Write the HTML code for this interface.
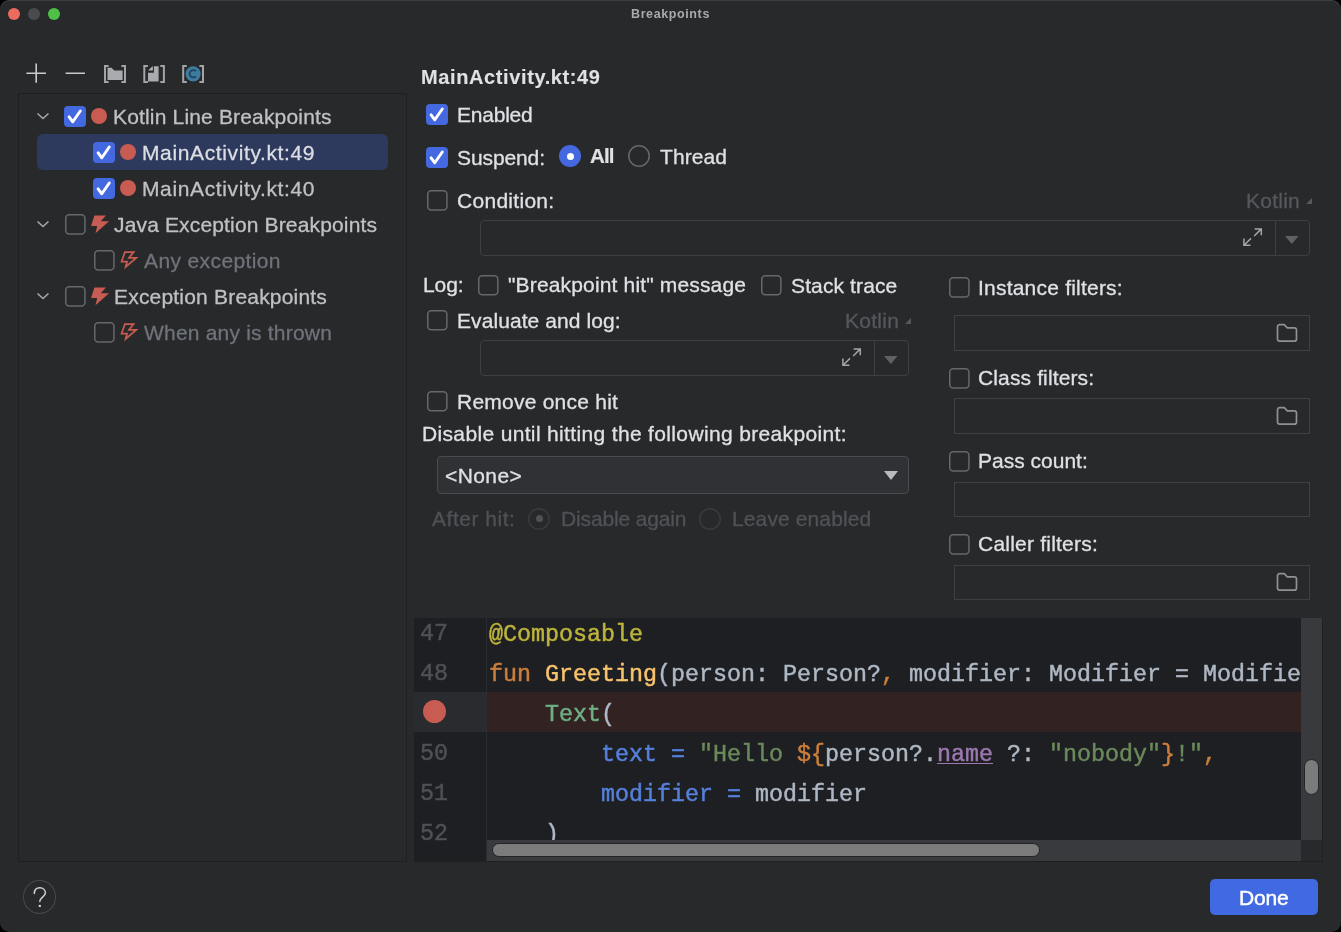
<!DOCTYPE html>
<html><head><meta charset="utf-8"><style>
html,body{margin:0;padding:0;background:#000;}
body{width:1341px;height:932px;overflow:hidden;position:relative;}
.win{position:absolute;left:0;top:0;width:1341px;height:932px;background:#28292B;border-radius:9.5px;box-shadow:inset 0 1px 0 #3C3D40;}
.r{position:absolute;}
.t{position:absolute;white-space:pre;-webkit-font-smoothing:antialiased;will-change:transform;-webkit-text-stroke:0.3px currentColor;font-family:"Liberation Sans",sans-serif;}
.code{font-family:"Liberation Mono",monospace;font-size:23.33px;line-height:23.33px;white-space:pre;-webkit-text-stroke:0.45px currentColor;}
.clip{position:absolute;overflow:hidden;}
</style></head><body>
<div class="win"></div>
<div class="r" style="left:8px;top:8px;width:12px;height:12px;background:#EC6A5E;border-radius:50%;"></div>
<div class="r" style="left:28px;top:8px;width:12px;height:12px;background:#4A4B4E;border-radius:50%;"></div>
<div class="r" style="left:48px;top:8px;width:12px;height:12px;background:#4EC048;border-radius:50%;"></div>
<div class="t" style="left:631.20px;top:7.71px;font-size:12.5px;line-height:12.5px;font-weight:700;color:#A9AAAD;letter-spacing:0.610px;font-family:'Liberation Sans', sans-serif;-webkit-text-stroke:0;">Breakpoints</div>
<svg class="r" style="left:0;top:0" width="100" height="95"><path d="M36.2 63.4V82.8M26.4 73.2H46M65.6 73.2H85" stroke="#C9CACD" stroke-width="1.6"/></svg>
<svg class="r" style="left:0;top:0" width="220" height="95" viewBox="0 0 220 95"><path d="M108.6 66H105V82H108.6" fill="none" stroke="#A3A4A7" stroke-width="2"/><path d="M121.4 66H125V82H121.4" fill="none" stroke="#A3A4A7" stroke-width="2"/><path d="M107.5 67.8H111.6L114.2 70.5H122.6V80H107.5Z" fill="#AAABAE"/><path d="M147.9 66H144.3V82H147.9" fill="none" stroke="#A3A4A7" stroke-width="2"/><path d="M160.3 66H163.9V82H160.3" fill="none" stroke="#A3A4A7" stroke-width="2"/><path d="M153.9 66.3H158.6V81.6H148V72.8H153.9Z" fill="#AAABAE"/><path d="M148.2 70.6L152.8 66.0V70.6Z" fill="#B4B5B8"/><path d="M186.79999999999998 66H183.2V82H186.79999999999998" fill="none" stroke="#A3A4A7" stroke-width="2"/><path d="M199.4 66H203V82H199.4" fill="none" stroke="#A3A4A7" stroke-width="2"/><circle cx="193.1" cy="73.8" r="7.6" fill="#3E7BA0"/><path d="M196.0 71.2A3.7 3.7 0 1 0 196.0 76.4" fill="none" stroke="#24465C" stroke-width="1.9"/></svg>
<div class="r" style="left:18px;top:93px;width:389px;height:769px;border:1px solid #1E1F22;box-sizing:border-box;"></div>
<div class="r" style="left:37px;top:134px;width:351px;height:36px;background:#2D3A5E;border-radius:6px;"></div>
<svg class="r" style="left:36px;top:111px" width="14" height="10" viewBox="0 0 14 10"><path d="M1.5 2.5L7 7.5L12.5 2.5" fill="none" stroke="#A8AAAE" stroke-width="1.5"/></svg>
<div class="r" style="left:64.2px;top:105.8px;width:21.60000000000001px;height:21.60000000000001px;background:#4468E0;border-radius:4px;"></div>
<svg class="r" style="left:64.2px;top:105.8px" width="21.6" height="21.6" viewBox="0 0 21.6 21.6"><path d="M5.10 10.80 L8.79 15.79 L16.31 4.99" fill="none" stroke="#fff" stroke-width="2.9" stroke-linecap="round" stroke-linejoin="round"/></svg>
<div class="r" style="left:91.0px;top:108.0px;width:16.0px;height:16.0px;background:#C85B52;border-radius:50%;"></div>
<div class="t" style="left:112.50px;top:105.72px;font-size:21px;line-height:21px;font-weight:400;color:#C0C1C4;letter-spacing:0.168px;font-family:'Liberation Sans', sans-serif;">Kotlin Line Breakpoints</div>
<div class="r" style="left:93.2px;top:141.9px;width:21.60000000000001px;height:21.599999999999994px;background:#4468E0;border-radius:4px;"></div>
<svg class="r" style="left:93.2px;top:141.9px" width="21.6" height="21.6" viewBox="0 0 21.6 21.6"><path d="M5.10 10.80 L8.79 15.79 L16.31 4.99" fill="none" stroke="#fff" stroke-width="2.9" stroke-linecap="round" stroke-linejoin="round"/></svg>
<div class="r" style="left:120.0px;top:144.0px;width:16.0px;height:16.0px;background:#C85B52;border-radius:50%;"></div>
<div class="t" style="left:141.60px;top:141.72px;font-size:21px;line-height:21px;font-weight:400;color:#DCDEE2;letter-spacing:0.629px;font-family:'Liberation Sans', sans-serif;">MainActivity.kt:49</div>
<div class="r" style="left:93.2px;top:177.9px;width:21.60000000000001px;height:21.599999999999994px;background:#4468E0;border-radius:4px;"></div>
<svg class="r" style="left:93.2px;top:177.9px" width="21.6" height="21.6" viewBox="0 0 21.6 21.6"><path d="M5.10 10.80 L8.79 15.79 L16.31 4.99" fill="none" stroke="#fff" stroke-width="2.9" stroke-linecap="round" stroke-linejoin="round"/></svg>
<div class="r" style="left:120.0px;top:180.0px;width:16.0px;height:16.0px;background:#C85B52;border-radius:50%;"></div>
<div class="t" style="left:141.60px;top:177.72px;font-size:21px;line-height:21px;font-weight:400;color:#C0C1C4;letter-spacing:0.629px;font-family:'Liberation Sans', sans-serif;">MainActivity.kt:40</div>
<svg class="r" style="left:36px;top:219px" width="14" height="10" viewBox="0 0 14 10"><path d="M1.5 2.5L7 7.5L12.5 2.5" fill="none" stroke="#A8AAAE" stroke-width="1.5"/></svg>
<svg class="r" style="left:63.5px;top:213.1px" width="22.7" height="22.7" viewBox="0 0 22.7 22.7"><rect x="1.75" y="1.75" width="19.2" height="19.2" rx="3.5" fill="none" stroke="#65686D" stroke-width="1.5"/></svg>
<svg class="r" style="left:90.5px;top:215px" width="19" height="19" viewBox="0 0 19 19"><path d="M3.4 0.4H15L9.8 6.3H18.1L4.5 18.3L6.2 11H0.1Z" fill="#C85B52"/></svg>
<div class="t" style="left:114.30px;top:213.72px;font-size:21px;line-height:21px;font-weight:400;color:#C0C1C4;letter-spacing:0.152px;font-family:'Liberation Sans', sans-serif;">Java Exception Breakpoints</div>
<svg class="r" style="left:92.6px;top:249.0px" width="22.7" height="22.7" viewBox="0 0 22.7 22.7"><rect x="1.75" y="1.75" width="19.2" height="19.2" rx="3.5" fill="none" stroke="#65686D" stroke-width="1.5"/></svg>
<svg class="r" style="left:119.5px;top:251px" width="19" height="19" viewBox="0 0 19 19"><path d="M4.9 1.1H13.6L9.0 6.8H16.3L5.6 16.0L7.1 10.5H1.6Z" fill="none" stroke="#C85B52" stroke-width="1.75" stroke-linejoin="miter"/></svg>
<div class="t" style="left:143.70px;top:249.72px;font-size:21px;line-height:21px;font-weight:400;color:#6F737A;letter-spacing:0.383px;font-family:'Liberation Sans', sans-serif;">Any exception</div>
<svg class="r" style="left:36px;top:291px" width="14" height="10" viewBox="0 0 14 10"><path d="M1.5 2.5L7 7.5L12.5 2.5" fill="none" stroke="#A8AAAE" stroke-width="1.5"/></svg>
<svg class="r" style="left:63.5px;top:285.1px" width="22.7" height="22.7" viewBox="0 0 22.7 22.7"><rect x="1.75" y="1.75" width="19.2" height="19.2" rx="3.5" fill="none" stroke="#65686D" stroke-width="1.5"/></svg>
<svg class="r" style="left:90.5px;top:287px" width="19" height="19" viewBox="0 0 19 19"><path d="M3.4 0.4H15L9.8 6.3H18.1L4.5 18.3L6.2 11H0.1Z" fill="#C85B52"/></svg>
<div class="t" style="left:114.30px;top:285.72px;font-size:21px;line-height:21px;font-weight:400;color:#C0C1C4;letter-spacing:0.195px;font-family:'Liberation Sans', sans-serif;">Exception Breakpoints</div>
<svg class="r" style="left:92.6px;top:321.0px" width="22.7" height="22.7" viewBox="0 0 22.7 22.7"><rect x="1.75" y="1.75" width="19.2" height="19.2" rx="3.5" fill="none" stroke="#65686D" stroke-width="1.5"/></svg>
<svg class="r" style="left:119.5px;top:323px" width="19" height="19" viewBox="0 0 19 19"><path d="M4.9 1.1H13.6L9.0 6.8H16.3L5.6 16.0L7.1 10.5H1.6Z" fill="none" stroke="#C85B52" stroke-width="1.75" stroke-linejoin="miter"/></svg>
<div class="t" style="left:143.70px;top:321.72px;font-size:21px;line-height:21px;font-weight:400;color:#6F737A;letter-spacing:0.200px;font-family:'Liberation Sans', sans-serif;">When any is thrown</div>
<div class="t" style="left:420.90px;top:66.56px;font-size:20px;line-height:20px;font-weight:700;color:#DFE1E5;letter-spacing:0.612px;font-family:'Liberation Sans', sans-serif;-webkit-text-stroke:0.1px currentColor;">MainActivity.kt:49</div>
<div class="r" style="left:426.2px;top:103.9px;width:21.600000000000023px;height:21.599999999999994px;background:#4468E0;border-radius:4px;"></div>
<svg class="r" style="left:426.2px;top:103.9px" width="21.6" height="21.6" viewBox="0 0 21.6 21.6"><path d="M5.10 10.80 L8.79 15.79 L16.31 4.99" fill="none" stroke="#fff" stroke-width="2.9" stroke-linecap="round" stroke-linejoin="round"/></svg>
<div class="t" style="left:456.90px;top:103.72px;font-size:21px;line-height:21px;font-weight:400;color:#DFE1E5;letter-spacing:-0.217px;font-family:'Liberation Sans', sans-serif;">Enabled</div>
<div class="r" style="left:426.2px;top:146.9px;width:21.600000000000023px;height:21.599999999999994px;background:#4468E0;border-radius:4px;"></div>
<svg class="r" style="left:426.2px;top:146.9px" width="21.6" height="21.6" viewBox="0 0 21.6 21.6"><path d="M5.10 10.80 L8.79 15.79 L16.31 4.99" fill="none" stroke="#fff" stroke-width="2.9" stroke-linecap="round" stroke-linejoin="round"/></svg>
<div class="t" style="left:456.90px;top:146.52px;font-size:21px;line-height:21px;font-weight:400;color:#DFE1E5;letter-spacing:-0.100px;font-family:'Liberation Sans', sans-serif;">Suspend:</div>
<div class="r" style="left:559.2px;top:145.3px;width:22.0px;height:22.0px;background:#4468E0;border-radius:50%;"></div>
<div class="r" style="left:566.7px;top:152.8px;width:7.0px;height:7.0px;background:#fff;border-radius:50%;"></div>
<div class="t" style="left:590.00px;top:146.44px;font-size:20.5px;line-height:20.5px;font-weight:700;color:#DFE1E5;letter-spacing:-0.850px;font-family:'Liberation Sans', sans-serif;-webkit-text-stroke:0.2px currentColor;">All</div>
<svg class="r" style="left:627.2px;top:144.3px" width="24" height="24" viewBox="0 0 24 24"><circle cx="12.0" cy="12.0" r="10.25" fill="none" stroke="#65686D" stroke-width="1.5"/></svg>
<div class="t" style="left:660.20px;top:146.02px;font-size:21px;line-height:21px;font-weight:400;color:#DFE1E5;letter-spacing:0.100px;font-family:'Liberation Sans', sans-serif;">Thread</div>
<svg class="r" style="left:425.6px;top:189.1px" width="22.7" height="22.7" viewBox="0 0 22.7 22.7"><rect x="1.75" y="1.75" width="19.2" height="19.2" rx="3.5" fill="none" stroke="#65686D" stroke-width="1.5"/></svg>
<div class="t" style="left:456.90px;top:189.62px;font-size:21px;line-height:21px;font-weight:400;color:#DFE1E5;letter-spacing:0.289px;font-family:'Liberation Sans', sans-serif;">Condition:</div>
<div class="t" style="left:1245.60px;top:189.82px;font-size:21px;line-height:21px;font-weight:400;color:#55585D;letter-spacing:0.240px;font-family:'Liberation Sans', sans-serif;">Kotlin</div>
<svg class="r" style="left:1305px;top:197px" width="8" height="8" viewBox="0 0 8 8"><path d="M7 1V7H1Z" fill="#55585D"/></svg>
<div class="r" style="left:480px;top:220px;width:830px;height:36px;border:1px solid #3E4043;border-radius:4px;box-sizing:border-box;"></div>
<div class="r" style="left:1275.4px;top:221px;width:1.0px;height:34px;background:#3E4043;"></div>
<svg class="r" style="left:1241.6px;top:226.6px" width="23" height="21" viewBox="0 0 23 21"><g transform="translate(1 1)" fill="none" stroke="#A3A5A9" stroke-width="1.5"><path d="M11.6 0.9H18.3V7.3M18.3 0.9L11.2 8.0"/><path d="M0.9 10.5V17.2H7.5M0.9 17.2L8.0 10.4"/></g></svg>
<svg class="r" style="left:1285.2px;top:235.7px" width="13.6" height="8" viewBox="0 0 13.6 8"><path d="M0 0H13.6L6.8 8Z" fill="#5F6165"/></svg>
<div class="t" style="left:422.60px;top:273.72px;font-size:21px;line-height:21px;font-weight:400;color:#DFE1E5;letter-spacing:-0.067px;font-family:'Liberation Sans', sans-serif;">Log:</div>
<svg class="r" style="left:476.6px;top:274.2px" width="22.6" height="22.6" viewBox="0 0 22.6 22.6"><rect x="1.75" y="1.75" width="19.1" height="19.1" rx="3.5" fill="none" stroke="#65686D" stroke-width="1.5"/></svg>
<div class="t" style="left:508.40px;top:274.32px;font-size:21px;line-height:21px;font-weight:400;color:#DFE1E5;letter-spacing:0.157px;font-family:'Liberation Sans', sans-serif;">"Breakpoint hit" message</div>
<svg class="r" style="left:759.7px;top:274.1px" width="22.6" height="22.6" viewBox="0 0 22.6 22.6"><rect x="1.75" y="1.75" width="19.1" height="19.1" rx="3.5" fill="none" stroke="#65686D" stroke-width="1.5"/></svg>
<div class="t" style="left:790.90px;top:274.72px;font-size:21px;line-height:21px;font-weight:400;color:#DFE1E5;letter-spacing:0.120px;font-family:'Liberation Sans', sans-serif;">Stack trace</div>
<svg class="r" style="left:425.6px;top:309.0px" width="22.6" height="22.6" viewBox="0 0 22.6 22.6"><rect x="1.75" y="1.75" width="19.1" height="19.1" rx="3.5" fill="none" stroke="#65686D" stroke-width="1.5"/></svg>
<div class="t" style="left:457.20px;top:309.62px;font-size:21px;line-height:21px;font-weight:400;color:#DFE1E5;letter-spacing:0.081px;font-family:'Liberation Sans', sans-serif;">Evaluate and log:</div>
<div class="t" style="left:845.40px;top:309.72px;font-size:21px;line-height:21px;font-weight:400;color:#55585D;letter-spacing:0.280px;font-family:'Liberation Sans', sans-serif;">Kotlin</div>
<svg class="r" style="left:904px;top:317px" width="8" height="8" viewBox="0 0 8 8"><path d="M7 1V7H1Z" fill="#55585D"/></svg>
<div class="r" style="left:480px;top:340px;width:429px;height:36px;border:1px solid #3E4043;border-radius:4px;box-sizing:border-box;"></div>
<div class="r" style="left:874.2px;top:341px;width:1.0px;height:34px;background:#3E4043;"></div>
<svg class="r" style="left:841.3px;top:346.6px" width="23" height="21" viewBox="0 0 23 21"><g transform="translate(1 1)" fill="none" stroke="#A3A5A9" stroke-width="1.5"><path d="M11.6 0.9H18.3V7.3M18.3 0.9L11.2 8.0"/><path d="M0.9 10.5V17.2H7.5M0.9 17.2L8.0 10.4"/></g></svg>
<svg class="r" style="left:884.0px;top:355.7px" width="13.6" height="8" viewBox="0 0 13.6 8"><path d="M0 0H13.6L6.8 8Z" fill="#5F6165"/></svg>
<svg class="r" style="left:425.7px;top:390.1px" width="22.6" height="22.6" viewBox="0 0 22.6 22.6"><rect x="1.75" y="1.75" width="19.1" height="19.1" rx="3.5" fill="none" stroke="#65686D" stroke-width="1.5"/></svg>
<div class="t" style="left:457.20px;top:390.72px;font-size:21px;line-height:21px;font-weight:400;color:#DFE1E5;letter-spacing:0.236px;font-family:'Liberation Sans', sans-serif;">Remove once hit</div>
<div class="t" style="left:422.30px;top:422.82px;font-size:21px;line-height:21px;font-weight:400;color:#DFE1E5;letter-spacing:0.346px;font-family:'Liberation Sans', sans-serif;">Disable until hitting the following breakpoint:</div>
<div class="r" style="left:437px;top:456px;width:472px;height:38px;background:#303134;border:1px solid #4A4B4F;border-radius:4px;box-sizing:border-box;"></div>
<div class="t" style="left:445.00px;top:464.72px;font-size:21px;line-height:21px;font-weight:400;color:#DFE1E5;letter-spacing:0.420px;font-family:'Liberation Sans', sans-serif;">&lt;None&gt;</div>
<svg class="r" style="left:883.8px;top:471.3px" width="14" height="9" viewBox="0 0 14 9"><path d="M0 0H14L7.0 9Z" fill="#B8BABE"/></svg>
<div class="t" style="left:431.50px;top:507.72px;font-size:21px;line-height:21px;font-weight:400;color:#505257;letter-spacing:0.522px;font-family:'Liberation Sans', sans-serif;">After hit:</div>
<svg class="r" style="left:527.3px;top:506.6px" width="24" height="24" viewBox="0 0 24 24"><circle cx="12.0" cy="12.0" r="10.25" fill="none" stroke="#393B3F" stroke-width="1.5"/></svg>
<div class="r" style="left:535.8px;top:515.1px;width:7.0px;height:7.0px;background:#505257;border-radius:50%;"></div>
<div class="t" style="left:560.50px;top:507.72px;font-size:21px;line-height:21px;font-weight:400;color:#505257;letter-spacing:-0.142px;font-family:'Liberation Sans', sans-serif;">Disable again</div>
<svg class="r" style="left:697.9px;top:506.6px" width="24" height="24" viewBox="0 0 24 24"><circle cx="12.0" cy="12.0" r="10.25" fill="none" stroke="#393B3F" stroke-width="1.5"/></svg>
<div class="t" style="left:731.80px;top:507.72px;font-size:21px;line-height:21px;font-weight:400;color:#505257;letter-spacing:0.117px;font-family:'Liberation Sans', sans-serif;">Leave enabled</div>
<svg class="r" style="left:947.6px;top:276.09999999999997px" width="22.7" height="22.7" viewBox="0 0 22.7 22.7"><rect x="1.75" y="1.75" width="19.2" height="19.2" rx="3.5" fill="none" stroke="#65686D" stroke-width="1.5"/></svg>
<div class="t" style="left:978.20px;top:277.02px;font-size:21px;line-height:21px;font-weight:400;color:#DFE1E5;letter-spacing:0.213px;font-family:'Liberation Sans', sans-serif;">Instance filters:</div>
<div class="r" style="left:954px;top:315.0px;width:356px;height:35.5px;border:1px solid #3E4043;box-sizing:border-box;"></div>
<svg class="r" style="left:1276px;top:322.85px" width="22" height="20" viewBox="0 0 22 20"><path d="M1.5 4Q1.5 1.7 3.8 1.7H8.2L11.3 4.8H18.2Q20.5 4.8 20.5 7.1V15.9Q20.5 18.2 18.2 18.2H3.8Q1.5 18.2 1.5 15.9Z" fill="none" stroke="#8E9196" stroke-width="1.7"/></svg>
<svg class="r" style="left:947.6px;top:367.0px" width="22.7" height="22.7" viewBox="0 0 22.7 22.7"><rect x="1.75" y="1.75" width="19.2" height="19.2" rx="3.5" fill="none" stroke="#65686D" stroke-width="1.5"/></svg>
<div class="t" style="left:978.20px;top:367.12px;font-size:21px;line-height:21px;font-weight:400;color:#DFE1E5;letter-spacing:0.131px;font-family:'Liberation Sans', sans-serif;">Class filters:</div>
<div class="r" style="left:954px;top:398.0px;width:356px;height:35.5px;border:1px solid #3E4043;box-sizing:border-box;"></div>
<svg class="r" style="left:1276px;top:405.85px" width="22" height="20" viewBox="0 0 22 20"><path d="M1.5 4Q1.5 1.7 3.8 1.7H8.2L11.3 4.8H18.2Q20.5 4.8 20.5 7.1V15.9Q20.5 18.2 18.2 18.2H3.8Q1.5 18.2 1.5 15.9Z" fill="none" stroke="#8E9196" stroke-width="1.7"/></svg>
<svg class="r" style="left:947.6px;top:450.0px" width="22.7" height="22.7" viewBox="0 0 22.7 22.7"><rect x="1.75" y="1.75" width="19.2" height="19.2" rx="3.5" fill="none" stroke="#65686D" stroke-width="1.5"/></svg>
<div class="t" style="left:978.20px;top:450.22px;font-size:21px;line-height:21px;font-weight:400;color:#DFE1E5;letter-spacing:0.000px;font-family:'Liberation Sans', sans-serif;">Pass count:</div>
<div class="r" style="left:954px;top:481.5px;width:356px;height:35.0px;border:1px solid #3E4043;box-sizing:border-box;"></div>
<svg class="r" style="left:947.6px;top:533.0px" width="22.7" height="22.7" viewBox="0 0 22.7 22.7"><rect x="1.75" y="1.75" width="19.2" height="19.2" rx="3.5" fill="none" stroke="#65686D" stroke-width="1.5"/></svg>
<div class="t" style="left:978.20px;top:533.22px;font-size:21px;line-height:21px;font-weight:400;color:#DFE1E5;letter-spacing:0.221px;font-family:'Liberation Sans', sans-serif;">Caller filters:</div>
<div class="r" style="left:954px;top:564.5px;width:356px;height:35.0px;border:1px solid #3E4043;box-sizing:border-box;"></div>
<svg class="r" style="left:1276px;top:571.95px" width="22" height="20" viewBox="0 0 22 20"><path d="M1.5 4Q1.5 1.7 3.8 1.7H8.2L11.3 4.8H18.2Q20.5 4.8 20.5 7.1V15.9Q20.5 18.2 18.2 18.2H3.8Q1.5 18.2 1.5 15.9Z" fill="none" stroke="#8E9196" stroke-width="1.7"/></svg>
<div class="r" style="left:414px;top:618px;width:908px;height:243px;background:#1E1F22;"></div>
<div class="r" style="left:414px;top:692px;width:72px;height:40px;background:#2A2B2E;"></div>
<div class="r" style="left:487px;top:692px;width:814px;height:40px;background:#332222;"></div>
<div class="r" style="left:486px;top:618px;width:1px;height:243px;background:#2B2C30;"></div>
<div class="r" style="left:1301px;top:618px;width:21px;height:222px;background:#393A3D;"></div>
<div class="r" style="left:1304.2px;top:759px;width:14.399999999999864px;height:35.799999999999955px;background:#7B7B7B;border:1px solid #232426;border-radius:8px;box-sizing:border-box;"></div>
<div class="r" style="left:487px;top:840px;width:814px;height:21px;background:#393A3D;"></div>
<div class="r" style="left:1301px;top:840px;width:21px;height:21px;background:#28292C;"></div>
<div class="r" style="left:1322px;top:618px;width:1px;height:244px;background:#1F2022;"></div>
<div class="r" style="left:414px;top:861px;width:909px;height:1px;background:#1F2022;"></div>
<div class="r" style="left:492.2px;top:843.2px;width:547.3999999999999px;height:14.199999999999932px;background:#7B7B7B;border:1px solid #232426;border-radius:8px;box-sizing:border-box;"></div>
<div class="clip" style="left:487px;top:618px;width:814px;height:222px;">
<div class="t code" style="left:2.40px;top:5.93px;"><span style="color:#BDB43C;">@Composable</span></div>
<div class="t code" style="left:2.40px;top:45.93px;"><span style="color:#CC7F3C;">fun&nbsp;</span><span style="color:#F8C36C;">Greeting</span><span style="color:#AEB8C4;">(person:&nbsp;Person?</span><span style="color:#CC7F3C;">,</span><span style="color:#AEB8C4;">&nbsp;modifier:&nbsp;Modifier&nbsp;=&nbsp;Modifier)</span></div>
<div class="t code" style="left:58.40px;top:85.93px;"><span style="color:#6FAF83;">Text</span><span style="color:#AEB8C4;">(</span></div>
<div class="t code" style="left:114.40px;top:125.93px;"><span style="color:#5580DC;">text</span><span style="color:#5580DC;">&nbsp;=&nbsp;</span><span style="color:#6A8A5C;">"Hello&nbsp;</span><span style="color:#CC7F3C;">${</span><span style="color:#AEB8C4;">person?.</span><span style="color:#9D78B0;text-decoration:underline;text-underline-offset:1.5px;text-decoration-thickness:1.3px;">name</span><span style="color:#AEB8C4;">&nbsp;?:&nbsp;</span><span style="color:#6A8A5C;">"nobody"</span><span style="color:#CC7F3C;">}</span><span style="color:#6A8A5C;">!"</span><span style="color:#CC7F3C;">,</span></div>
<div class="t code" style="left:114.40px;top:165.93px;"><span style="color:#5580DC;">modifier</span><span style="color:#5580DC;">&nbsp;=&nbsp;</span><span style="color:#AEB8C4;">modifier</span></div>
<div class="t code" style="left:58.40px;top:205.93px;"><span style="color:#AEB8C4;">)</span></div>
</div>
<div class="clip" style="left:414px;top:618px;width:72px;height:243px;">
<div class="t code" style="left:5.90px;top:5.13px;color:#4E5157;">47</div>
<div class="t code" style="left:5.90px;top:45.13px;color:#4E5157;">48</div>
<div class="t code" style="left:5.90px;top:125.13px;color:#4E5157;">50</div>
<div class="t code" style="left:5.90px;top:165.13px;color:#4E5157;">51</div>
<div class="t code" style="left:5.90px;top:205.13px;color:#4E5157;">52</div>
</div>
<div class="r" style="left:423.1px;top:700.2px;width:23.0px;height:23.0px;background:#C85B52;border-radius:50%;"></div>
<div class="r" style="left:22.7px;top:879.8px;width:33.7px;height:34.30000000000007px;border:1px solid #46484C;border-radius:50%;box-sizing:border-box;"></div>
<svg class="r" style="left:0;top:850px" width="80" height="82" viewBox="0.6 850 80 82"><path d="M34.9 893.6C34.9 889.6 37.5 887.7 40.4 887.7C43.5 887.7 46 889.9 46 893C46 896.6 40.4 897.3 40.4 901.6" fill="none" stroke="#D0D2D6" stroke-width="1.5" stroke-linecap="round"/><circle cx="40.4" cy="905.9" r="1.2" fill="#D0D2D6"/></svg>
<div class="r" style="left:1210px;top:879px;width:108px;height:36px;background:#4169E1;border-radius:5px;"></div>
<div class="t" style="left:1238.90px;top:886.52px;font-size:21px;line-height:21px;font-weight:400;color:#FFFFFF;letter-spacing:-0.167px;font-family:'Liberation Sans', sans-serif;-webkit-text-stroke:0.45px currentColor;">Done</div>
</body></html>
